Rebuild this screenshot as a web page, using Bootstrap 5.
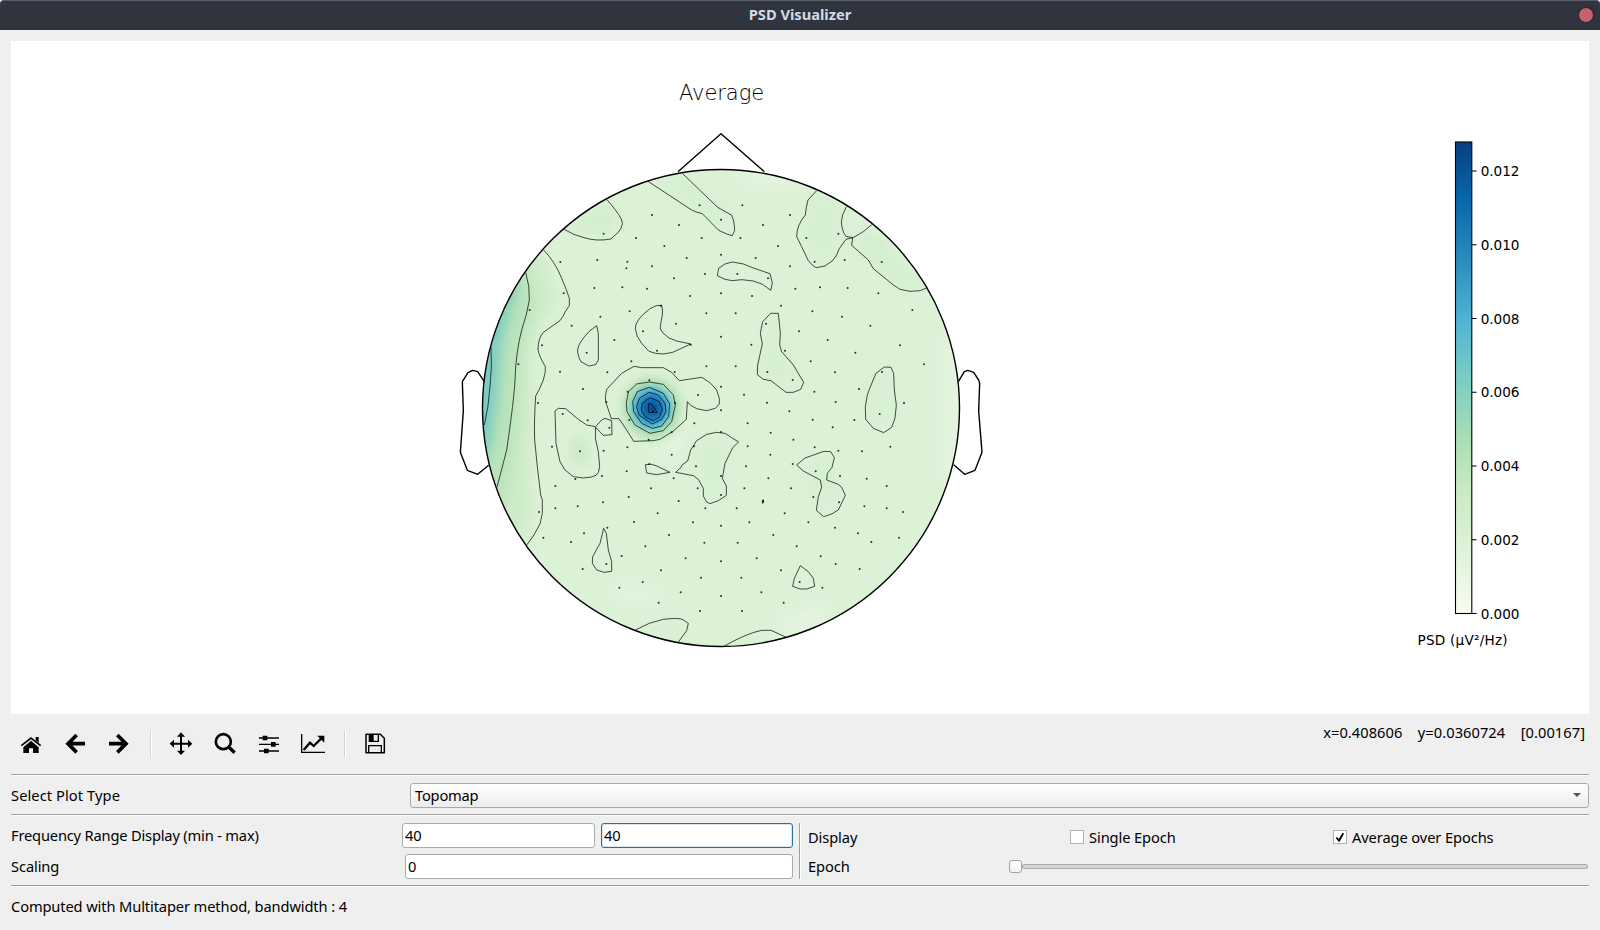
<!DOCTYPE html>
<html lang="en">
<head>
<meta charset="utf-8">
<title>PSD Visualizer</title>
<link href="https://cdn.jsdelivr.net/npm/bootstrap@5.3.0/dist/css/bootstrap.min.css" rel="stylesheet">
<style>
body{background:#efefef;color:#000;font:14.67px/20px "Noto Sans",sans-serif;letter-spacing:-.1px;height:930px;overflow:hidden}
.titlebar{height:30px;background:#2f343f;border-top:1px solid #5a5e66;border-radius:4px 4px 0 0;color:#d3dae3;letter-spacing:0;padding-bottom:3px}
.close-dot{width:14px;height:14px;border-radius:50%;background:#c4616a;box-shadow:0 0 0 1px #242935;right:7px;top:7px}
.page{padding:11px 11px 0}
.plot{display:block;width:1578px;height:673px;background:#fff}
.toolbar{height:60px;margin-left:-2px}
.tool{width:44px;height:60px;padding:0;border:0;background:none;display:flex;align-items:center;justify-content:center}
.tool svg{width:24px;height:24px;overflow:visible}
.split{width:18px;height:28px;display:flex;justify-content:center;padding-left:2px}
.split::before{content:"";width:2px;background:linear-gradient(90deg,#d2d2d2 50%,#fff 50%)}
.rule{height:2px;background:#9f9f9f;border-bottom:1px solid #fff}
.field{height:25px;border:1px solid #aaa;border-radius:3px;background:#fff;padding:0 2px 2px;line-height:21px;font-size:14.67px;color:#000;letter-spacing:-.2px;box-shadow:none;width:auto;min-width:0;outline:0}
.field.active{border-color:#2272a3;box-shadow:inset 0 0 0 1px #d9e8f0}
.combo{background:linear-gradient(#fff,#ececec);padding:0 0 0 4px}
.arrow{width:0;border:4px solid transparent;border-top:4px solid #555;border-bottom:0;margin-right:7px}
.vrule{width:2px;height:56px;background:linear-gradient(90deg,#9f9f9f 50%,#fff 50%)}
.box{width:14px;height:14px;border:1px solid #b2b2b2;background:#fff;display:block}
.box svg{display:block}
.groove{height:5px;border:1px solid #aaa;background:#d6d6d6;border-radius:2px}
.knob{width:13px;height:13px;border:1px solid #a3a3a3;border-radius:3px;background:linear-gradient(#fff,#f2f2f2)}
#coords{padding:8px 4px 0 0;letter-spacing:.05px;white-space:pre}
.plotrow{height:38px}.lbl-main{width:399px;letter-spacing:.08px}
.settings{height:69px;padding-top:7px}
.left-pane{width:782px;gap:6px}.lbl-freq{width:391px;padding-bottom:2px;letter-spacing:-.18px}.f1{width:193px!important;margin-right:6px}.f2{width:192px!important}.lbl-scale{width:394px;padding-bottom:2px}
.vrule{margin-left:6px}
.right-pane{padding:4px 1px 0 7px}
.disp{height:20px}.c1{width:262px}.c2{width:244px;padding-left:5px;margin-right:5px}.c3{padding-left:5px}
.epochrow{height:20px;margin-top:9px}.c4{width:201px}
.status{padding-top:9px;letter-spacing:-.12px}
</style>
</head>
<body class="d-flex flex-column">
<header class="titlebar position-relative d-flex align-items-center justify-content-center fw-bold">PSD Visualizer<span class="close-dot position-absolute"></span></header>
<main class="page">
<svg class="plot" viewBox="11 41 1578 673">
<defs>
<linearGradient id="gnbu" x1="0" y1="1" x2="0" y2="0"><stop offset="0" stop-color="#f7fcf0"/><stop offset=".125" stop-color="#e0f3db"/><stop offset=".25" stop-color="#ccebc5"/><stop offset=".375" stop-color="#a8ddb5"/><stop offset=".5" stop-color="#7bccc4"/><stop offset=".625" stop-color="#4eb3d3"/><stop offset=".75" stop-color="#2b8cbe"/><stop offset=".875" stop-color="#0868ac"/><stop offset="1" stop-color="#084081"/></linearGradient>
<radialGradient id="peak"><stop offset="0" stop-color="#084a8f"/><stop offset=".12" stop-color="#0860a6"/><stop offset=".24" stop-color="#1a75b5"/><stop offset=".35" stop-color="#3a9fcb"/><stop offset=".44" stop-color="#62bfcd"/><stop offset=".52" stop-color="#8dd1c0"/><stop offset=".6" stop-color="#b0dfb8"/><stop offset=".75" stop-color="#cfebc9"/><stop offset="1" stop-color="#dcf2d7" stop-opacity="0"/></radialGradient>
<clipPath id="head"><circle cx="813" cy="864" r="715"/></clipPath>
<filter id="b1" x="-50%" y="-50%" width="200%" height="200%"><feGaussianBlur stdDeviation="24"/></filter>
<filter id="b2" x="-50%" y="-50%" width="200%" height="200%"><feGaussianBlur stdDeviation="16"/></filter>
</defs>
<text x="679" y="100" textLength="85" font-family="DejaVu Sans, sans-serif" font-weight="200" font-size="21">Average</text>
<g transform="translate(450 120) scale(.333333)" fill="none" stroke-linejoin="round">
<g clip-path="url(#head)">
<rect x="90" y="140" width="1450" height="1450" fill="#dcf2d7"/>
<g filter="url(#b1)">
<path fill="#cdebc8" d="M200 360 280 420 325 540 265 620 245 720 245 900 235 1080 240 1220 190 1280 40 1240 40 360Z"/>
<path fill="#d2edcd" d="M342 328 470 238 505 300 480 345ZM1210 360 1270 330 1410 500 1350 500Z"/>
<path fill="#e5f5e0" d="M850 150H1040L1020 200 910 190ZM1490 620 1540 700 1540 1040 1480 1080ZM500 1400 640 1420 620 1450 480 1430ZM990 1500 1120 1460 1150 1530 980 1550Z"/>
<path fill="#e6f5e1" d="M610 990 690 930 710 960 660 1010Z"/>
<path fill="#d6efd1" d="M594 184 697 160 850 285 846 340ZM1090 220 1180 240 1170 370 1110 430 1050 350ZM950 590 980 590 985 680 1050 780 1000 800 930 750ZM1260 750H1320V900L1300 920 1260 890ZM720 980 790 945 850 965 820 1130 770 1130ZM570 1520 700 1500 690 1560ZM1060 1030 1140 1010 1160 1120 1110 1180Z"/>
</g>
<g filter="url(#b2)">
<path fill="#bbe4bd" d="M225 430 255 540 235 610 210 710 208 880 185 1040 165 1160 40 1160 40 430Z"/>
<path fill="#a3dab6" d="M205 450 210 520 190 590 167 680 160 780 152 870 135 980 110 1055 40 1080 40 430Z"/>
<path fill="#78cac5" d="M180 470 187 510 165 580 143 680 137 790 130 870 112 990 20 1010 20 500Z"/>
<path fill="#cae9c5" d="M365 945 400 955 420 1010 400 1045 365 1020Z"/>
</g>
<ellipse cx="605" cy="864" rx="122" ry="128" fill="url(#peak)"/>
</g>
<g stroke="#000" stroke-opacity=".78" stroke-width="2.7">
<path d="M470 238Q500 272 514 297 521 310 513 325 505 340 492 348L483 357Q440 365 402 353 370 345 342 328M594 184 725 270Q735 276 757 281L806 331 830 342 847 347 854 331Q853 300 844 285L803 262 780 240 697 160M281 390Q315 425 335 475 350 510 358 535L358 557 347 573Q340 590 330 602L280 637Q264 655 264 690 268 710 286 740 288 755 280 780L268 808 257 828Q252 900 254 960L262 1040 272 1125 277 1140V1180L270 1212 250 1248 230 1275M227 457Q240 500 238 540 232 580 215 630 197 700 195 780 192 840 170 990L141 1102M123 680Q127 740 120 800 116 860 103 915"/>
<path d="M440 617Q412 635 402 652 380 680 383 697 386 715 393 725L416 738 437 734 445 720V640ZM635 556Q620 553 600 566 555 600 556 625 558 650 575 670L597 694Q615 702 640 702 670 700 690 687L722 672 680 663Q655 657 640 640L631 627Q630 620 637 585 639 570 635 556Z"/>
</g>
<g stroke="#000" stroke-opacity=".78" stroke-width="2.7" transform="translate(0 780)">
<path d="M470 28 515-20 552-41 575-37H640L665-23 688 2 755-8 780 8 800 30 808 55 808 72 796 85 770 92 740 86 722 76 712 65 709 118 670 153 630 178 610 182 551 184 530 150 507 116H484L467 65 466 50Z"/>
<path d="M598 6 560 12 535 36 529 70 531 95 555 135 600 160 640 152 665 125 676 75 670 45 640 13ZM598 22 562 35 548 65 551 95 575 130 607 145 635 138 656 110 659 72 640 40ZM597 37 568 55 560 80 567 105 607 132 635 118 648 95 645 70 625 45ZM600 53 577 70 574 90 585 110 609 122 628 112 637 88 628 65ZM596 70V97L622 98 606 74Z"/>
<path d="M315 93 325 85 347 86 385 118 410 135 437 140 455 120 465 115 485 122 486 164 460 166 437 142 436 175 445 215 449 260 445 278 438 286 425 291 400 294 370 290 345 270 330 245 318 190ZM586 254 605 253 620 258 660 277 620 284 590 279ZM677 277 693 262 697 254 713 243 722 210 740 182 770 163 800 157 825 160 845 173 866 186 848 203 825 250 817 295 829 318V346L805 362 780 371 770 366 760 348V325L745 298 730 287ZM461 445 469 460 475 510 485 545V574L462 577 440 570 427 550 428 530 450 490ZM556 750Q600 725 640 718 690 712 700 720L715 730 710 752 685 786"/>
</g>
<g stroke="#000" stroke-opacity=".78" stroke-width="2.7" transform="translate(780 0)">
<path d="M320 212 294 240 289 262 286 285Q260 315 260 350L275 380 295 422 307 435 318 443 345 438 368 422 380 405 387 387 408 358 431 352 460 335 485 314M409 260Q395 285 394 305 396 335 408 349L428 353 425 376 475 420 490 446 550 495 570 508Q600 518 630 512L650 504M22 467 26 445 45 432 67 426 100 432 130 444 180 461 187 490 182 511 158 493 130 483 95 479 67 482 45 478ZM182 580H205L211 640 209 675 215 695 250 735 281 787 272 808 250 817H228L215 807 183 782 160 778 142 764 143 735 157 672 151 640 158 605ZM523 741 543 742 551 760 553 810 559 855 555 895 545 922 521 938 490 925 467 898 466 860 472 825 480 803 498 760Z"/>
<path transform="translate(0 780)" d="M43 798Q110 760 155 751H183L229 772M271 557 295 575 310 595 314 619 290 627H270L248 619 253 595ZM260 255 285 234 342 214 362 215 373 233 366 262 352 280 350 300 385 313 395 322 406 346 385 390 365 402 341 410 319 391 325 350 335 322 331 300 280 273ZM157 361 160 359 161 368 157 370Z"/>
</g>
<path id="sensors" stroke="#000" stroke-opacity=".8" stroke-width="6" stroke-linecap="round"/>
<g stroke="#000" stroke-width="4.2">
<circle cx="813" cy="864" r="715.5"/>
<path d="M684 155 813 41 943 155M103 785 83 755 68 751 54 758 37 785 40 873 31 997 52 1051 83 1063 116 1036M1525 785 1543 755 1553 751 1571 757 1586 780 1589 790 1586 873 1596 997 1575 1051 1544 1063 1511 1034"/>
</g>
</g>
<rect x="1455.5" y="142" width="16.3" height="471.5" fill="url(#gnbu)" stroke="#000" stroke-width="1.1"/>
<path stroke="#000" stroke-width="1.1" d="M1472 171h4.6m-4.6 73.7h4.6m-4.6 73.8h4.6m-4.6 73.7h4.6m-4.6 73.8h4.6m-4.6 73.7h4.6m-4.6 73.8h4.6"/>
<g font-family="DejaVu Sans" font-size="13.6">
<text x="1480.7" y="176" textLength="38.6">0.012</text><text x="1480.7" y="249.8" textLength="38.6">0.010</text><text x="1480.7" y="323.5" textLength="38.6">0.008</text><text x="1480.7" y="397.2" textLength="38.6">0.006</text><text x="1480.7" y="471" textLength="38.6">0.004</text><text x="1480.7" y="544.8" textLength="38.6">0.002</text><text x="1480.7" y="618.5" textLength="38.6">0.000</text>
<text x="1417.5" y="644.5" textLength="90">PSD (µV²/Hz)</text>
</g>
</svg>
<div class="toolbar d-flex align-items-center">
<button class="tool" aria-label="Home"><svg viewBox="57 96 72 72"><path d="M93 122 116 142V159H99V145H87V159H70V142Z"/><path d="M64 137 93 114 122 137" fill="none" stroke="#000" stroke-width="5"/><path d="M107 111H116V129L107 121Z"/></svg></button>
<button class="tool" aria-label="Back"><svg viewBox="189 96 72 72"><path d="M230 105 204 131 230 157M205 131H255" fill="none" stroke="#000" stroke-width="11"/></svg></button>
<button class="tool" aria-label="Forward"><svg viewBox="321 96 72 72"><path d="M352 105 378 131 352 157M377 131H327" fill="none" stroke="#000" stroke-width="11"/></svg></button>
<span class="split"></span>
<button class="tool" aria-label="Pan"><svg viewBox="507 96 72 72"><path d="M543 103V159M516 131H570" stroke="#000" stroke-width="6"/><path d="M543 97 555 110H531ZM543 165 555 152H531ZM509 131 522 119V143ZM577 131 564 119V143Z"/></svg></button>
<button class="tool" aria-label="Zoom"><svg viewBox="639 96 72 72"><circle cx="670" cy="125" r="22.5" fill="none" stroke="#000" stroke-width="8"/><path d="M686 141 704 158" stroke="#000" stroke-width="10"/></svg></button>
<button class="tool" aria-label="Subplots"><svg viewBox="771 96 72 72"><path d="M777 114H837M777 133H837M777 153H837" stroke="#000" stroke-width="4"/><path d="M788 107h14v14h-14zM813 126h14v14h-14zM792 146h14v14h-14z"/></svg></button>
<button class="tool" aria-label="Customize"><svg viewBox="903 96 72 72"><path d="M905 102V157H975" fill="none" stroke="#000" stroke-width="4"/><path d="M911 150 930 128 941 138 964 115" fill="none" stroke="#000" stroke-width="7"/><path d="M952 107H973V128Z"/></svg></button>
<span class="split"></span>
<button class="tool" aria-label="Save"><svg viewBox="1089 96 72 72"><path d="M1098 103H1141L1153 115V158H1098Z" fill="none" stroke="#000" stroke-width="4.5" stroke-linejoin="round"/><path d="M1108 103V124H1135V103M1106 158V137H1144V158" fill="none" stroke="#000" stroke-width="4"/><path d="M1108 104h13v20h-13z"/></svg></button>
<div class="ms-auto d-flex align-self-start" id="coords">x=0.408606    y=0.0360724    [0.00167]</div>
</div>
<div class="rule"></div>
<div class="d-flex align-items-center plotrow"><span class="lbl-main">Select Plot Type</span><div class="field combo d-flex align-items-center justify-content-between flex-grow-1">Topomap<span class="arrow"></span></div></div>
<div class="rule"></div>
<div class="d-flex settings">
<div class="left-pane d-flex flex-column">
<div class="d-flex align-items-center"><span class="lbl-freq">Frequency Range Display (min - max)</span><input class="field f1" value="40" aria-label="Minimum"><input class="field active f2" value="40" aria-label="Maximum"></div>
<div class="d-flex align-items-center"><span class="lbl-scale">Scaling</span><input class="field flex-grow-1" value="0" aria-label="Scaling"></div>
</div>
<div class="vrule"></div>
<div class="right-pane flex-grow-1 d-flex flex-column">
<div class="d-flex align-items-center disp"><span class="c1">Display</span><span class="box"></span><span class="c2">Single Epoch</span><span class="box"><svg width="12" height="12" viewBox="0 0 12 12"><path d="M2.3 6.5 5 9.6 9.3 2.2" fill="none" stroke="#000" stroke-width="1.9"/></svg></span><span class="c3">Average over Epochs</span></div>
<div class="d-flex align-items-center epochrow"><span class="c4">Epoch</span><span class="knob"></span><span class="groove flex-grow-1"></span></div>
</div>
</div>
<div class="rule"></div>
<div class="status">Computed with Multitaper method, bandwidth : 4</div>
</main>
<script>
// Electrode positions, one list per quadrant of the head
const quadrants=[
[0,0,"606 285 749 256 687 315 461 341 558 354 643 378 755 354 710 414 331 426 442 420 532 425 606 439 765 462 672 475 341 520 433 504 517 502 591 506 720 528 239 570 365 617 451 590 539 574 769 580 678 611 633 557 579 634 276 676 410 698 493 660 621 692 722 674 205 733 330 755 472 757 544 724 674 756 769 739"],
[780,0,"33 299 97 256 159 315 240 285 91 354 204 378 289 354 385 341 33 404 137 414 314 425 404 420 515 426 82 462 174 475 240 439 256 506 330 502 413 504 505 520 33 520 126 528 213 557 307 574 396 590 481 617 607 570 77 580 168 611 267 634 353 660 436 698 570 676 33 650 124 674 225 692 302 724 375 757 516 756 642 733 77 739 172 756 248 780"],
[0,780,"399 27 264 69 338 102 413 121 469 66 533 35 598 1 675 69 744 45 538 120 478 143 306 200 390 214 461 212 532 202 596 179 665 157 733 130 665 224 732 199 738 259 376 297 456 288 530 274 598 252 671 295 316 318 603 325 743 325 536 351 459 367 383 379 316 385 267 396 686 363 766 385 623 400 552 426 729 427 472 443 402 460 280 473 363 486 657 465 586 499 763 488 515 528 469 552 398 567 707 535 633 571 753 593 578 606 508 623 692 637 626 668 750 693 609 94"],
[780,780,"33 20 102 44 171 68 238 94 313 35 377 66 447 27 582 69 509 102 433 120 33 91 113 130 182 158 308 119 368 142 33 156 113 199 250 179 181 224 314 202 385 212 456 214 541 200 248 252 317 274 390 288 470 296 530 318 33 288 108 259 175 295 103 325 243 325 33 345 310 351 387 367 463 379 530 385 579 396 80 385 159 364 224 400 295 427 375 443 444 460 484 486 567 473 33 437 118 427 190 465 260 499 83 488 332 529 377 552 449 567 140 535 213 571 33 544 94 593 269 606 337 623 154 637 33 648 221 668 96 693"]];
document.getElementById("sensors").setAttribute("d",quadrants.map(([dx,dy,list])=>{const n=list.split(" ").map(Number);let d="";for(let i=0;i<n.length;i+=2)d+=`M${n[i]+dx} ${n[i+1]+dy}h.1`;return d}).join("")+"M529 445h.1");
</script>
<script src="https://cdn.jsdelivr.net/npm/bootstrap@5.3.0/dist/js/bootstrap.bundle.min.js"></script>
</body>
</html>
